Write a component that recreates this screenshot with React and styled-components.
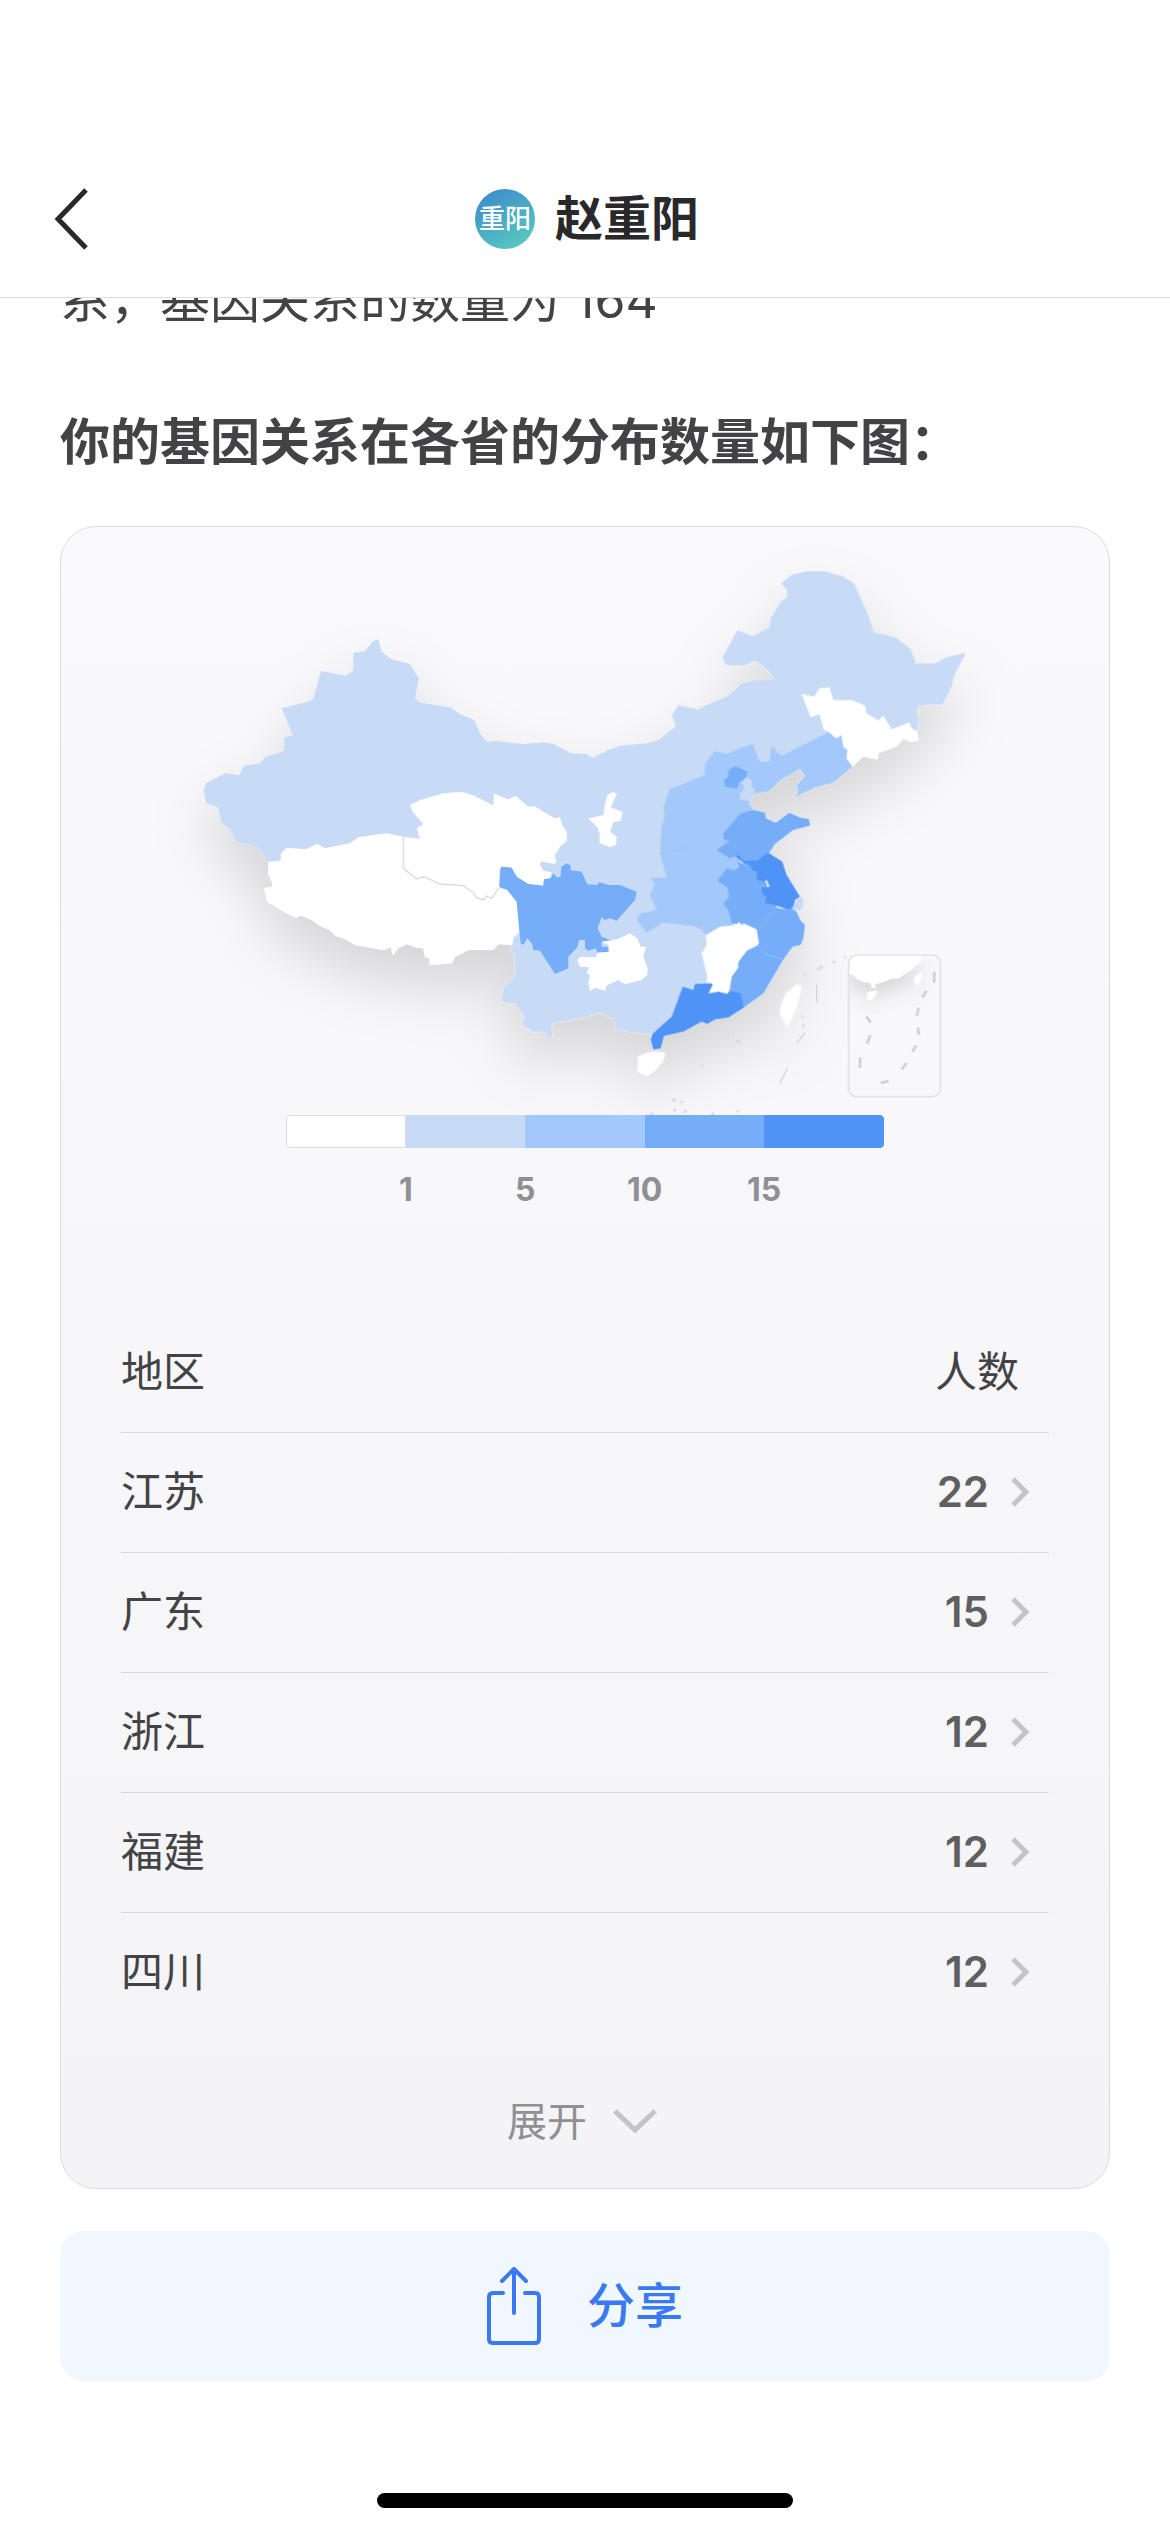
import React, { useCallback, useState } from 'react';
import styled, { createGlobalStyle } from 'styled-components';

const COLORS = {
  none: '#ffffff',
  low: '#c7dbf6',
  mid: '#a3c8fa',
  high: '#75adf8',
  top: '#4f93f7',
};

const LEGEND = [
  { id: 'none', label: '1' },
  { id: 'low', label: '5' },
  { id: 'mid', label: '10' },
  { id: 'high', label: '15' },
  { id: 'top', label: '' },
];

const REGIONS = [
  { name: '江苏', count: 22 },
  { name: '广东', count: 15 },
  { name: '浙江', count: 12 },
  { name: '福建', count: 12 },
  { name: '四川', count: 12 },
];

// Each sheet of the map has its own origin, three units to a pixel.
const SHEETS = [
  {
    id: 'base-west',
    x: 190,
    y: 620,
    shapes: [
      ['low', '565 58 575 95 605 118 660 132 687 175 675 235 688 247 780 262 815 285 852 300 870 340 920 600 900 700 640 652 590 640 505 652 480 670 405 685 382 672 348 688 290 684 272 700 268 722 235 726 200 680 138 665 122 630 95 608 84 562 50 550 40 512 48 490 105 460 148 466 160 438 210 430 225 412 283 392 283 352 308 346 275 265 350 246 370 236 393 152 468 167 490 150 490 98 525 94 548 64'],
    ],
  },
  {
    id: 'base-north-east',
    x: 700,
    y: 550,
    shapes: [
      ['low', '-280 602 -240 587 -160 580 -125 572 -90 542 -72 528 -85 495 -65 465 -5 478 25 462 85 437 125 400 160 390 225 388 205 362 165 332 133 347 78 345 67 322 112 240 158 258 208 232 212 205 240 158 262 140 260 118 243 100 275 74 320 64 375 64 430 80 462 100 485 150 505 195 522 247 588 262 632 297 648 340 705 340 738 322 798 308 765 372 755 410 727 465 685 462 655 470 650 480 656 510 650 545 600 560 400 600 200 640 100 800 0 900 -280 900'],
    ],
  },
  {
    id: 'center',
    x: 400,
    y: 720,
    shapes: [
      ['low', '185 -15 222 0 240 40 260 65 290 63 370 72 430 67 460 72 515 100 560 102 578 113 620 92 670 77 740 72 780 58 810 33 1000 100 1000 500 920 800 850 880 750 942 690 935 645 925 640 895 595 875 560 890 480 905 455 910 458 950 442 953 435 935 400 935 365 915 373 890 345 850 305 847 310 805 345 770 345 700 330 690 340 655 358 635 300 500 240 350 180 300'],
      ['none', '30 255 60 240 130 220 185 215 220 226 280 256 282 220 322 238 348 228 385 260 405 258 425 272 465 295 480 292 487 315 500 335 500 362 480 380 463 408 470 425 462 432 425 424 420 432 428 450 455 458 450 475 432 478 430 497 380 492 350 470 335 443 305 440 297 450 300 470 297 503 275 535 258 528 252 540 228 532 222 520 190 497 120 492 72 470 50 477 10 445 10 350 60 356 50 325 70 312 38 275'],
      ['none', '638 215 650 222 632 262 668 275 662 303 640 305 630 335 650 350 648 375 630 382 598 368 600 345 592 322 565 295 610 285 615 250 622 225'],
    ],
  },
  {
    id: 'tibet',
    x: 190,
    y: 620,
    shapes: [
      ['none', '235 726 272 722 275 700 290 684 348 688 382 672 405 685 480 670 505 652 590 640 640 650 640 745 680 777 700 770 750 792 820 797 852 820 858 832 882 840 888 828 905 835 927 803 952 810 980 845 988 935 970 955 968 975 925 972 910 990 835 990 795 1010 785 1030 720 1035 718 1015 705 1012 700 985 680 983 650 972 625 985 608 1005 603 982 580 990 495 975 465 957 437 948 420 930 395 920 365 900 332 886 318 893 290 880 232 845 222 805 248 800 245 782 235 765'],
    ],
  },
  {
    id: 'south-west',
    x: 400,
    y: 720,
    shapes: [
      ['high', '303 440 335 443 350 470 385 492 430 497 432 478 452 475 460 460 470 472 482 470 484 440 500 430 512 436 512 450 545 455 562 493 592 495 598 486 625 495 660 495 710 515 705 540 650 602 630 595 612 600 605 590 600 605 593 625 605 650 630 660 605 665 605 680 625 680 625 695 592 698 588 685 565 692 555 685 555 660 537 660 533 680 505 710 505 745 465 762 420 692 400 690 397 672 382 655 370 675 362 670 350 545 322 510 298 500 300 465'],
      ['none', '690 640 712 655 722 680 738 680 730 710 743 745 742 765 725 780 675 793 655 780 620 797 615 813 588 803 570 813 565 790 570 765 560 760 567 742 540 740 532 720 540 710 588 712 592 698 628 695 625 675 605 665 630 662 660 655'],
    ],
  },
  {
    id: 'east',
    x: 620,
    y: 680,
    shapes: [
      ['mid', '148 328 255 285 255 250 285 213 320 222 398 190 418 245 448 245 455 200 485 228 630 155 652 175 665 165 670 200 683 210 680 235 697 258 680 275 640 308 585 322 522 352 535 335 530 315 555 288 540 267 485 298 445 335 405 340 395 350 388 370 400 392 400 480 350 560 350 680 340 735 260 770 248 750 220 738 165 732 130 728 80 758 50 720 62 700 110 690 90 645 105 610 90 595 140 592 120 520 125 440 135 405 130 385'],
      ['high', '345 258 382 275 378 298 358 305 352 325 315 320 312 300 325 290 325 272'],
      ['low', '380 290 395 300 395 318 405 330 400 342 390 365 360 358 360 340 372 325 365 305'],
      ['high', '310 460 360 402 400 390 435 397 438 415 467 428 508 398 540 412 567 417 570 437 520 450 465 492 445 522 410 542 370 542 350 525 330 535 290 510 330 482 312 480'],
      ['high', '320 565 345 572 355 560 352 545 390 558 395 570 420 575 440 612 440 640 450 650 465 668 470 682 415 750 375 732 335 730 325 690 310 670 328 650 322 622 292 602'],
      ['top', '345 528 355 524 370 542 410 542 445 518 487 545 500 585 540 650 525 660 520 685 505 690 480 680 435 668 440 650 425 640 425 622 450 620 440 600 430 605 410 598 410 575 395 570 390 558 372 550'],
      ['low', '540 648 550 655 550 680 540 693 515 685 530 662'],
      ['high', '460 682 500 688 515 685 530 695 540 720 555 735 550 775 542 795 518 800 490 838 440 825 415 800 410 750'],
      ['high', '415 796 440 825 490 838 430 940 372 982 362 945 330 932 335 890 355 860 355 845 380 812'],
      ['none', '258 765 300 740 350 735 358 725 362 740 375 732 410 750 417 790 380 812 352 850 355 862 335 890 322 940 295 935 268 942 268 930 280 912 258 905 262 890 245 820 260 795'],
      ['top', '188 920 220 930 225 912 275 910 278 915 265 940 295 935 322 942 330 932 362 940 372 982 325 1012 285 1018 262 1032 245 1025 190 1055 132 1068 122 1105 100 1108 92 1080 97 1062 155 1010 170 970'],
      ['none', '55 1130 90 1117 135 1118 130 1140 105 1172 80 1188 55 1175'],
      ['none', '530 915 545 920 530 980 503 1040 480 1000 485 970 500 940'],
    ],
  },
  {
    id: 'jilin',
    x: 700,
    y: 550,
    shapes: [
      ['none', '305 432 342 440 358 415 388 412 400 450 455 450 495 467 500 490 530 508 535 512 550 497 575 538 628 517 635 535 650 543 655 570 630 575 610 565 590 588 535 608 533 628 490 618 457 648 440 625 443 600 430 590 425 555 408 565 385 545 372 540 358 492 332 502'],
    ],
  },
];

function ChinaMap() {
  return (
    <MapSvg viewBox="61 527 1048 588" role="img" aria-label="各省分布图">
      <defs>
        <filter id="land-shadow" x="-20%" y="-20%" width="140%" height="150%">
          <feDropShadow dx="0" dy="30" stdDeviation="30" floodColor="#000" floodOpacity="0.14" />
        </filter>
        <clipPath id="inset-clip">
          <rect x="476" y="585" width="275" height="425" rx="24" />
        </clipPath>
      </defs>

      <g filter="url(#land-shadow)">
        {SHEETS.map(({ id, x, y, shapes }) => (
          <g key={id} transform={`translate(${x} ${y}) scale(0.33333)`}>
            {shapes.map(([level, points]) => (
              <polygon key={points} points={points} fill={COLORS[level]} />
            ))}
          </g>
        ))}
      </g>

      {/* provincial borders */}
      <g transform="translate(400 720) scale(0.33333)" fill="none" stroke="#dadada" strokeWidth="4">
        <path d="M10 350V445L50 477L72 470L120 492L190 497L222 520L228 532L252 540L258 528L275 535L297 503" />
      </g>
      <g transform="translate(620 680) scale(0.33333)" fill="none" strokeWidth="2">
        <path stroke="#8cbcfb" d="M470 684L412 750M415 798L440 825L490 838" />
        <path stroke="#9bc2f8" d="M120 520L180 508L240 485" />
        <g stroke="#d3d3d5" strokeWidth="4">
          <path d="M590 915V967M555 1058L530 1090M502 1165L478 1213" />
        </g>
        <g fill="#d9d9db">
          <circle cx="555" cy="884" r="4" />
          <circle cx="596" cy="866" r="5" />
          <circle cx="605" cy="860" r="5" />
          <circle cx="642" cy="847" r="5" />
          <circle cx="676" cy="832" r="4" />
          <circle cx="548" cy="1010" r="4" />
          <circle cx="550" cy="1038" r="4" />
          <circle cx="325" cy="1067" r="5" />
          <circle cx="355" cy="1084" r="6" />
          <circle cx="246" cy="1156" r="4" />
          <circle cx="162" cy="1260" r="5" />
          <circle cx="185" cy="1266" r="4" />
          <circle cx="164" cy="1290" r="5" />
          <circle cx="196" cy="1294" r="5" />
          <circle cx="95" cy="1302" r="5" />
          <circle cx="278" cy="1302" r="5" />
          <circle cx="354" cy="1294" r="4" />
        </g>
      </g>

      {/* South China Sea inset */}
      <g transform="translate(690 760) scale(0.33333)">
        <g clipPath="url(#inset-clip)">
          <g filter="url(#land-shadow)">
            <path
              fill="#fff"
              d="M470 580H702L690 605L660 632L625 655L605 655L580 666L556 672L556 684L546 684L542 670L515 664L500 656L490 645L470 640Z"
            />
            <path fill="#fff" d="M532 697L560 692L558 704L545 720L530 717Z" />
            <path fill="#fff" d="M692 640L698 646L682 680L672 664L677 648Z" />
          </g>
        </g>
        <rect x="476" y="585" width="275" height="425" rx="24" fill="none" stroke="#e2e2e4" strokeWidth="5" />
        <path
          fill="none"
          stroke="#cfcfd1"
          strokeWidth="8"
          d="M733 635L732 668M709 692L698 712M686 743L680 767M684 803L686 825M678 856L668 876M650 909L635 928M596 963L572 969M529 769L542 788M541 826L531 851M511 892L509 924"
        />
      </g>
    </MapSvg>
  );
}

export default function App() {
  const [expanded, setExpanded] = useState(false);

  const onExpandHandler = useCallback(() => {
    setExpanded((value) => !value);
  }, []);

  const regionRows = REGIONS.map(({ name, count }) => (
    <tr key={name}>
      <Cell>{name}</Cell>
      <Cell $end>
        <CountLink href={`#${name}`}>
          {count}
          <svg width="18" height="30" viewBox="0 0 18 30" fill="none" aria-hidden="true">
            <path d="M2 2L15 15L2 28" stroke="#c3c3c9" strokeWidth="5" />
          </svg>
        </CountLink>
      </Cell>
    </tr>
  ));

  return (
    <>
      <GlobalStyle />
      <Page>
        <Header>
          <BackButton type="button" aria-label="返回">
            <svg width="34" height="62" viewBox="0 0 34 62" fill="none" aria-hidden="true">
              <path d="M32 2L4 31L32 60" stroke="#29292b" strokeWidth="5" />
            </svg>
          </BackButton>
          <Avatar>重阳</Avatar>
          <Title>赵重阳</Title>
        </Header>

        <Content>
          <Summary>系，基因关系的数量为 164</Summary>
          <Heading>你的基因关系在各省的分布数量如下图：</Heading>

          <Card>
            <ChinaMap />
            <Legend>
              {LEGEND.map(({ id, label }) => (
                <LegendItem key={id} $color={COLORS[id]}>
                  <span>{label}</span>
                </LegendItem>
              ))}
            </Legend>
            <Table>
              <thead>
                <tr>
                  <Cell as="th" scope="col">
                    地区
                  </Cell>
                  <Cell as="th" scope="col" $end $heading>
                    人数
                  </Cell>
                </tr>
              </thead>
              <tbody>{regionRows}</tbody>
            </Table>
            <ExpandButton type="button" onClick={onExpandHandler} aria-expanded={expanded}>
              展开
              <svg width="44" height="26" viewBox="0 0 44 26" fill="none" aria-hidden="true">
                <path d="M2 2L22 21L42 2" stroke="#c3c3c9" strokeWidth="5" />
              </svg>
            </ExpandButton>
          </Card>

          <ShareButton type="button">
            <svg width="54" height="78" viewBox="0 0 54 78" fill="none" aria-hidden="true">
              <path
                d="M16 26H6Q2 26 2 30V72Q2 76 6 76H48Q52 76 52 72V30Q52 26 48 26H38M27 46V3M15 14L27 2L39 14"
                stroke="#3a79f2"
                strokeWidth="4"
                strokeLinecap="round"
                strokeLinejoin="round"
              />
            </svg>
            分享
          </ShareButton>
        </Content>

        <HomeIndicator />
      </Page>
    </>
  );
}

const GlobalStyle = createGlobalStyle`
  * {
    box-sizing: border-box;
  }

  body {
    margin: 0;
    background-color: #fff;
    color: #434345;
    font-family: Inter, 'Noto Sans CJK SC', sans-serif;
    line-height: 1.2;
  }

  button {
    border: 0;
    background: none;
    font-family: inherit;
    line-height: 1.2;
    cursor: pointer;
  }

  svg {
    display: block;
    flex: none;
  }
`;

const Page = styled.div`
  display: flex;
  flex-direction: column;
  min-height: 100vh;
`;

const Header = styled.header`
  position: sticky;
  top: 0;
  z-index: 1;
  display: flex;
  justify-content: center;
  align-items: center;
  gap: 20px;
  height: 298px;
  padding: 141px 0 0 4px;
  background-color: #fff;
  border-bottom: 1px solid #dcdcde;
`;

const BackButton = styled.button`
  position: absolute;
  left: 54px;
  padding: 0;
`;

const Avatar = styled.span`
  display: flex;
  justify-content: center;
  align-items: center;
  width: 60px;
  height: 60px;
  border-radius: 50%;
  background: linear-gradient(150deg, #3f8dcb 10%, #57c9c0 90%);
  color: #fff;
  font-size: 26px;
  font-weight: 500;
`;

const Title = styled.h1`
  margin: 0;
  color: #29292b;
  font-size: 48px;
  font-weight: 700;
`;

const Content = styled.main`
  display: flex;
  flex-direction: column;
  padding: 0 60px;
`;

const Summary = styled.p`
  margin: -38px 0 62px;
  font-size: 50px;
  line-height: 80px;
`;

const Heading = styled.h2`
  margin: 0 0 44px;
  font-size: 50px;
  font-weight: 700;
  line-height: 80px;
  white-space: nowrap;
`;

const Card = styled.section`
  display: flex;
  flex-direction: column;
  align-items: center;
  border: 1px solid #dcdce0;
  border-radius: 36px;
  background: linear-gradient(#fafafc, #f4f4f7);
`;

const MapSvg = styled.svg`
  width: 100%;
`;

const Legend = styled.ul`
  display: flex;
  width: 57%;
  margin: 0;
  padding: 0;
  list-style: none;
`;

const LegendItem = styled.li`
  flex: 1;

  &::before {
    content: '';
    display: block;
    height: 31px;
    border: 1px solid ${({ $color }) => ($color === '#ffffff' ? '#dcdce0' : $color)};
    background-color: ${({ $color }) => $color};
  }

  &:first-child::before {
    border-radius: 4px 0 0 4px;
  }

  &:last-child::before {
    border-radius: 0 4px 4px 0;
  }

  span {
    display: block;
    height: 40px;
    margin: 22px -50% 0 50%;
    color: #8f8f94;
    font-size: 32px;
    font-weight: 700;
    line-height: 40px;
    text-align: center;
  }
`;

const Table = styled.table`
  align-self: stretch;
  margin: 102px 60px 0;
  border-collapse: collapse;
  font-size: 42px;

  tbody tr:last-child td {
    border-bottom: 0;
  }
`;

const Cell = styled.td`
  height: 120px;
  padding: 0 ${({ $end, $heading }) => ($heading ? '30px' : $end ? '20px' : 0)} 0 0;
  border-bottom: 1px solid #dadade;
  font-weight: 400;
  text-align: ${({ $end }) => ($end ? 'right' : 'left')};
`;

const CountLink = styled.a`
  display: flex;
  justify-content: flex-end;
  align-items: center;
  gap: 22px;
  color: #5f5f61;
  font-weight: 600;
  text-decoration: none;
`;

const ExpandButton = styled.button`
  display: flex;
  align-items: center;
  gap: 26px;
  margin: 60px 0 36px;
  padding: 0 6px 0 0;
  color: #8f8f94;
  font-size: 40px;
  line-height: 60px;
`;

const ShareButton = styled.button`
  display: flex;
  justify-content: center;
  align-items: center;
  gap: 46px;
  height: 150px;
  margin-top: 42px;
  border-radius: 24px;
  background-color: #f1f7fe;
  color: #3a79f2;
  font-size: 48px;
  font-weight: 500;
`;

const HomeIndicator = styled.div`
  align-self: center;
  width: 416px;
  height: 15px;
  margin: auto 0 24px;
  border-radius: 8px;
  background-color: #000;
`;
